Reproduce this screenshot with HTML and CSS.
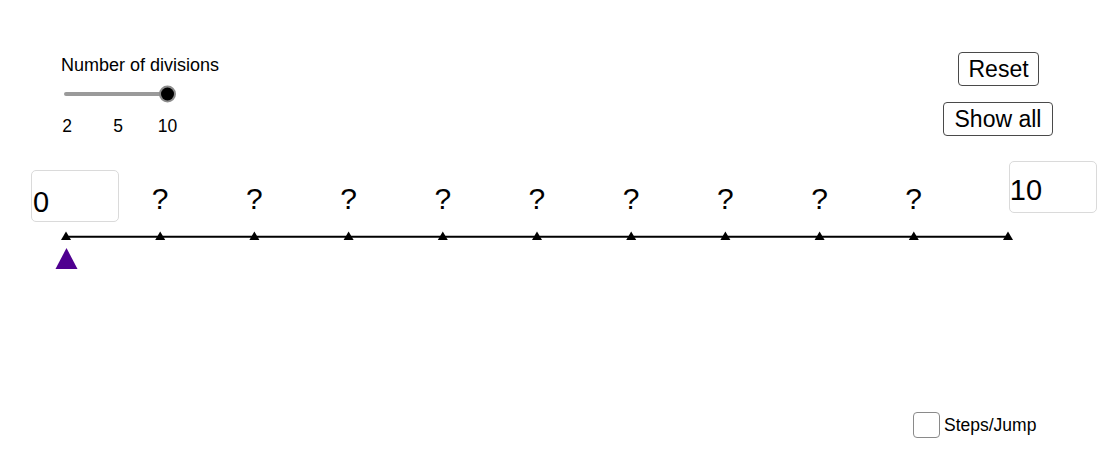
FILE: index.html
```html
<!DOCTYPE html>
<html>
<head>
<meta charset="utf-8">
<link rel="stylesheet" href="styles.css">
</head>
<body>
<div class="app">
  <div class="top">
    <div class="slider-block">
      <div class="slider-title">Number of divisions</div>
      <svg class="slider" width="120" height="20" viewBox="0 0 120 20">
        <line x1="5" y1="10" x2="106" y2="10" stroke="#9a9a9a" stroke-width="4" stroke-linecap="round"/>
        <circle cx="106.5" cy="10" r="8.5" fill="#8c8c8c"/>
        <circle cx="106.5" cy="10" r="6.5" fill="#000"/>
      </svg>
      <div class="slider-labels">
        <span class="lbl l1">2</span>
        <span class="lbl l2">5</span>
        <span class="lbl">10</span>
      </div>
    </div>
    <div class="buttons">
      <button class="btn btn-reset">Reset</button>
      <button class="btn btn-show">Show all</button>
    </div>
  </div>

  <div class="labels">
    <div class="box box-start">0</div>
    <div class="q">?</div>
    <div class="q">?</div>
    <div class="q">?</div>
    <div class="q">?</div>
    <div class="q">?</div>
    <div class="q">?</div>
    <div class="q">?</div>
    <div class="q">?</div>
    <div class="q">?</div>
    <div class="box box-end">10</div>
  </div>

  <svg class="line" width="1109" height="50" viewBox="0 225 1109 50">
    <line x1="66" y1="236.7" x2="1008" y2="236.7" stroke="#000" stroke-width="2"/>
    <g fill="#000">
      <polygon points="66,231.5 61,240 71,240"/>
      <polygon points="160.2,231.5 155.2,240 165.2,240"/>
      <polygon points="254.4,231.5 249.4,240 259.4,240"/>
      <polygon points="348.6,231.5 343.6,240 353.6,240"/>
      <polygon points="442.8,231.5 437.8,240 447.8,240"/>
      <polygon points="537,231.5 532,240 542,240"/>
      <polygon points="631.2,231.5 626.2,240 636.2,240"/>
      <polygon points="725.4,231.5 720.4,240 730.4,240"/>
      <polygon points="819.6,231.5 814.6,240 824.6,240"/>
      <polygon points="913.8,231.5 908.8,240 918.8,240"/>
      <polygon points="1008,231.5 1003,240 1013,240"/>
    </g>
    <polygon points="66.5,248 55.5,269 77.5,269" fill="#4f0090"/>
  </svg>

  <div class="footer">
    <span class="check"></span>
    <span class="check-label">Steps/Jump</span>
  </div>
</div>
</body>
</html>
```

FILE: styles.css
```css
html, body {
  margin: 0;
  padding: 0;
  background: #fff;
}

.app {
  width: 1109px;
  height: 450px;
  overflow: hidden;
  font-family: "Liberation Sans", Arial, sans-serif;
  color: #000;
}

.top {
  display: flex;
  justify-content: space-between;
  align-items: flex-start;
  padding-top: 52px;
  padding-left: 61px;
  padding-right: 56px;
}

.slider-block {
  margin-top: 3px;
  display: flex;
  flex-direction: column;
  align-items: flex-start;
}

.slider-title {
  font-size: 18px;
  line-height: 20px;
}

.slider {
  display: block;
  margin-top: 9px;
}

.slider-labels {
  display: flex;
  margin-top: 12px;
  margin-left: -4px;
  font-size: 17.5px;
  line-height: 20px;
}

.lbl {
  width: 20px;
  text-align: center;
}

.l1 { margin-right: 31px; }
.l2 { margin-right: 29.5px; }

.buttons {
  display: flex;
  flex-direction: column;
  align-items: center;
  gap: 16px;
}

.btn {
  box-sizing: border-box;
  height: 34px;
  padding: 0 10px;
  font-family: "Liberation Sans", Arial, sans-serif;
  font-size: 23px;
  line-height: 32px;
  color: #000;
  background: #fff;
  border: 1px solid #4a4a4a;
  border-radius: 4px;
}

.btn-reset { width: 81px; }
.btn-show { width: 110px; }

.labels {
  display: grid;
  grid-template-columns: repeat(11, 94.2px);
  align-items: start;
  margin-top: 25px;
  padding-left: 18.9px;
}

.q {
  justify-self: center;
  margin-top: 20.6px;
  font-size: 30px;
  line-height: 34px;
}

.box {
  box-sizing: border-box;
  width: 88px;
  height: 52px;
  border: 1px solid #dadada;
  border-radius: 5px;
  font-size: 29px;
  line-height: 34px;
  padding-left: 1px;
}

.box-start {
  justify-self: start;
  margin-left: 12px;
  margin-top: 9px;
  padding-top: 14px;
}

.box-end {
  justify-self: start;
  margin-left: 48px;
  padding-top: 11px;
  padding-left: 0;
}

.line {
  display: block;
  margin-top: 3px;
}

.footer {
  display: flex;
  align-items: center;
  gap: 4px;
  margin-top: 137px;
  padding-left: 913px;
}

.check {
  box-sizing: border-box;
  width: 27px;
  height: 26px;
  border: 1px solid #8a8a8a;
  border-radius: 4px;
}

.check-label {
  font-size: 17.5px;
  line-height: 20px;
}
```
